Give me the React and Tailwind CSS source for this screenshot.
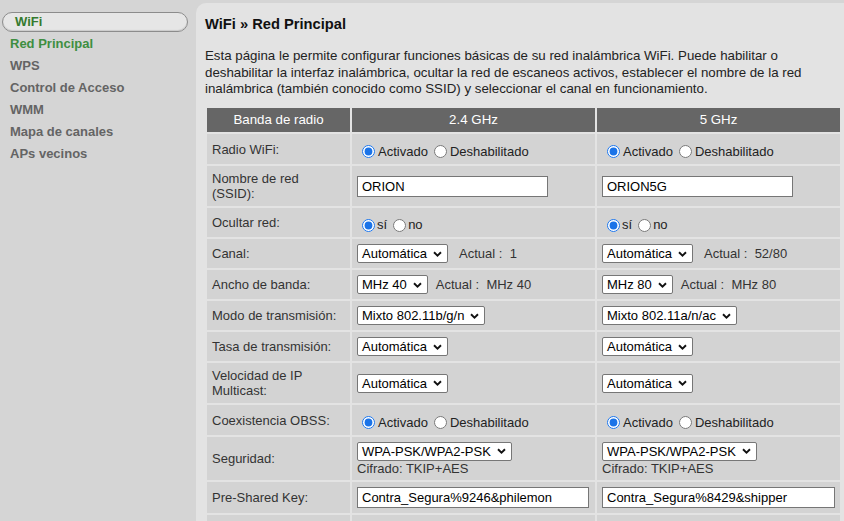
import React from "react"

const font = { fontFamily: '"Liberation Sans", Arial, sans-serif' }

function Chevron() {
  return (
    <svg width="9" height="6" viewBox="0 0 9 6" className="ml-[6px] shrink-0">
      <path d="M1 1.2 L4.5 4.6 L8 1.2" fill="none" stroke="#111" strokeWidth="1.9" />
    </svg>
  )
}

function Select({ value }) {
  return (
    <span className="inline-flex items-center h-[19px] bg-white border border-[#767676] rounded-[2px] pl-[4px] pr-[5px] text-[13px] text-black leading-none whitespace-nowrap">
      {value}
      <Chevron />
    </span>
  )
}

function TextInput({ value, width }) {
  return (
    <input
      readOnly
      value={value}
      className={
        "h-[21px] bg-white border border-[#767676] px-[4px] text-[13px] text-black outline-none " +
        width
      }
    />
  )
}

function Radios({ a, b, gap }) {
  return (
    <span className="inline-flex items-center text-[13px] text-[#222] pt-[5px]">
      <input type="radio" defaultChecked className="ml-[5px] w-[13px] h-[13px] accent-[#1a73e8]" />
      <span className={gap}>{a}</span>
      <input type="radio" className="ml-[6px] w-[13px] h-[13px]" />
      <span className={gap}>{b}</span>
    </span>
  )
}

function Actual({ value, gap }) {
  return (
    <span className={"text-[13px] text-[#333] whitespace-pre " + gap}>
      {"Actual :  " + value}
    </span>
  )
}

function Label({ children }) {
  return (
    <div className="bg-[#d3d3d3] flex items-center pl-[5px] text-[13px] leading-[15px] text-[#333]">
      {children}
    </div>
  )
}

function Cell({ children, column }) {
  return (
    <div className={"bg-[#d3d3d3] flex items-center pl-[5px] " + (column ? "flex-col items-start justify-center" : "")}>
      {children}
    </div>
  )
}

export default function App() {
  const menu = ["WPS", "Control de Acceso", "WMM", "Mapa de canales", "APs vecinos"]

  return (
    <div style={font} className="flex w-[844px] h-[521px] overflow-hidden bg-[#d5d5d5]">
      <aside className="w-[196px] shrink-0 pt-[12px] text-[13px] font-bold">
        <div className="ml-[2px] w-[186px] h-[20px] rounded-full border border-[#8c8c8c] bg-[#e6e6e6] shadow-[inset_0_-1px_1px_rgba(0,0,0,0.12)] pl-[12px] leading-[18px] text-[#357a2e]">
          WiFi
        </div>
        <div className="mt-[1px] pl-[10px] h-[22px] leading-[22px] text-[#3e8e41]">Red Principal</div>
        {menu.map((m) => (
          <div key={m} className="pl-[10px] h-[22px] leading-[22px] text-[#646464]">
            {m}
          </div>
        ))}
      </aside>

      <main className="flex-1 mt-[3px] bg-[#e3e3e3] rounded-tl-[10px] pl-[9px] pt-[12px]">
        <h1 className="text-[14.7px] font-bold h-[18px] leading-[18px] text-[#111]">WiFi » Red Principal</h1>
        <p className="mt-[15px] text-[13.3px] leading-[16.5px] text-[#222]">
          Esta página le permite configurar funciones básicas de su red inalámbrica WiFi. Puede habilitar o
          <br />
          deshabilitar la interfaz inalámbrica, ocultar la red de escaneos activos, establecer el nombre de la red
          <br />
          inalámbrica (también conocido como SSID) y seleccionar el canal en funcionamiento.
        </p>

        <div className="mt-[10.5px] ml-[2px] grid grid-cols-[143px_243px_243px] grid-rows-[24px_30px_40px_29px_29px_29px_29px_29px_40px_30px_43px_31px_30px] gap-[2px]">
          <div className="bg-[#666666] text-white text-[13.3px] flex items-center justify-center">Banda de radio</div>
          <div className="bg-[#666666] text-white text-[13.3px] flex items-center justify-center">2.4 GHz</div>
          <div className="bg-[#666666] text-white text-[13.3px] flex items-center justify-center">5 GHz</div>

          <Label>Radio WiFi:</Label>
          <Cell><Radios a="Activado" b="Deshabilitado" gap="ml-[3px]" /></Cell>
          <Cell><Radios a="Activado" b="Deshabilitado" gap="ml-[3px]" /></Cell>

          <Label>Nombre de red<br />(SSID):</Label>
          <Cell><TextInput value="ORION" width="w-[191px]" /></Cell>
          <Cell><TextInput value="ORION5G" width="w-[191px]" /></Cell>

          <Label>Ocultar red:</Label>
          <Cell><Radios a="sí" b="no" gap="ml-[2px]" /></Cell>
          <Cell><Radios a="sí" b="no" gap="ml-[2px]" /></Cell>

          <Label>Canal:</Label>
          <Cell><Select value="Automática" /><Actual value="1" gap="ml-[11px]" /></Cell>
          <Cell><Select value="Automática" /><Actual value="52/80" gap="ml-[11px]" /></Cell>

          <Label>Ancho de banda:</Label>
          <Cell><Select value="MHz 40" /><Actual value="MHz 40" gap="ml-[8px]" /></Cell>
          <Cell><Select value="MHz 80" /><Actual value="MHz 80" gap="ml-[8px]" /></Cell>

          <Label>Modo de transmisión:</Label>
          <Cell><Select value="Mixto 802.11b/g/n" /></Cell>
          <Cell><Select value="Mixto 802.11a/n/ac" /></Cell>

          <Label>Tasa de transmisión:</Label>
          <Cell><Select value="Automática" /></Cell>
          <Cell><Select value="Automática" /></Cell>

          <Label>Velocidad de IP<br />Multicast:</Label>
          <Cell><Select value="Automática" /></Cell>
          <Cell><Select value="Automática" /></Cell>

          <Label>Coexistencia OBSS:</Label>
          <Cell><Radios a="Activado" b="Deshabilitado" gap="ml-[3px]" /></Cell>
          <Cell><Radios a="Activado" b="Deshabilitado" gap="ml-[3px]" /></Cell>

          <Label>Seguridad:</Label>
          <Cell column>
            <Select value="WPA-PSK/WPA2-PSK" />
            <span className="text-[13px] leading-[15px] text-[#333]">Cifrado: TKIP+AES</span>
          </Cell>
          <Cell column>
            <Select value="WPA-PSK/WPA2-PSK" />
            <span className="text-[13px] leading-[15px] text-[#333]">Cifrado: TKIP+AES</span>
          </Cell>

          <Label>Pre-Shared Key:</Label>
          <Cell><TextInput value="Contra_Segura%9246&philemon" width="w-[232px]" /></Cell>
          <Cell><TextInput value="Contra_Segura%8429&shipper" width="w-[233px]" /></Cell>

          <div className="bg-[#d3d3d3]" />
          <div className="bg-[#d3d3d3]" />
          <div className="bg-[#d3d3d3]" />
        </div>
      </main>
    </div>
  )
}
